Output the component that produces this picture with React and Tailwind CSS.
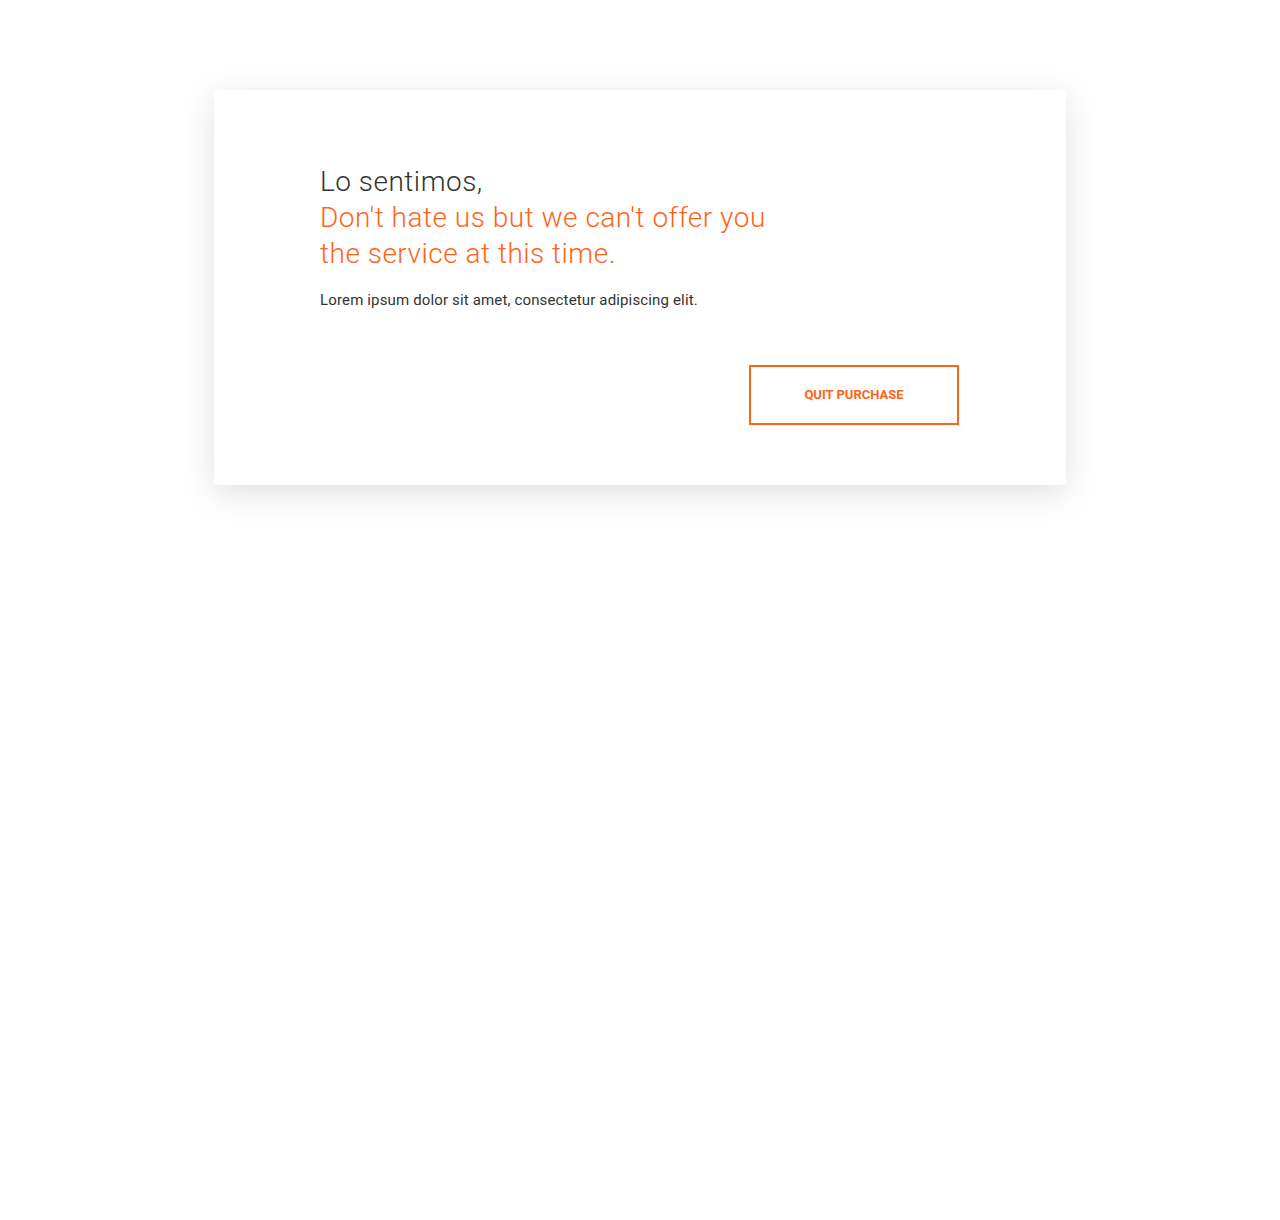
export default function App() {
  return (
    <div className="min-h-[1220px] bg-white pt-[90px]" style={{ fontFamily: '"Roboto", "Liberation Sans", sans-serif' }}>
      <div className="mx-auto w-[852px] rounded bg-white pl-[106px] pr-[107px] pt-[74px] pb-[60px] shadow-[0_8px_32px_rgba(0,0,0,0.13)]">
        <div className="text-[28px] leading-[36px] font-light tracking-[0.5px]">
          <div className="text-[#333333]">Lo sentimos,</div>
          <div className="text-[#ff6418] w-[470px]">Don't hate us but we can't offer you the service at this time.</div>
        </div>
        <p className="mt-[18px] text-[15px] leading-[20px] tracking-[0.15px] text-[#333333]">Lorem ipsum dolor sit amet, consectetur adipiscing elit.</p>
        <div className="mt-[55px] flex justify-end">
          <button className="h-[60px] w-[210px] border-2 border-[#ff6418] text-[13px] font-bold uppercase text-[#ff6418]">Quit purchase</button>
        </div>
      </div>
    </div>
  );
}
